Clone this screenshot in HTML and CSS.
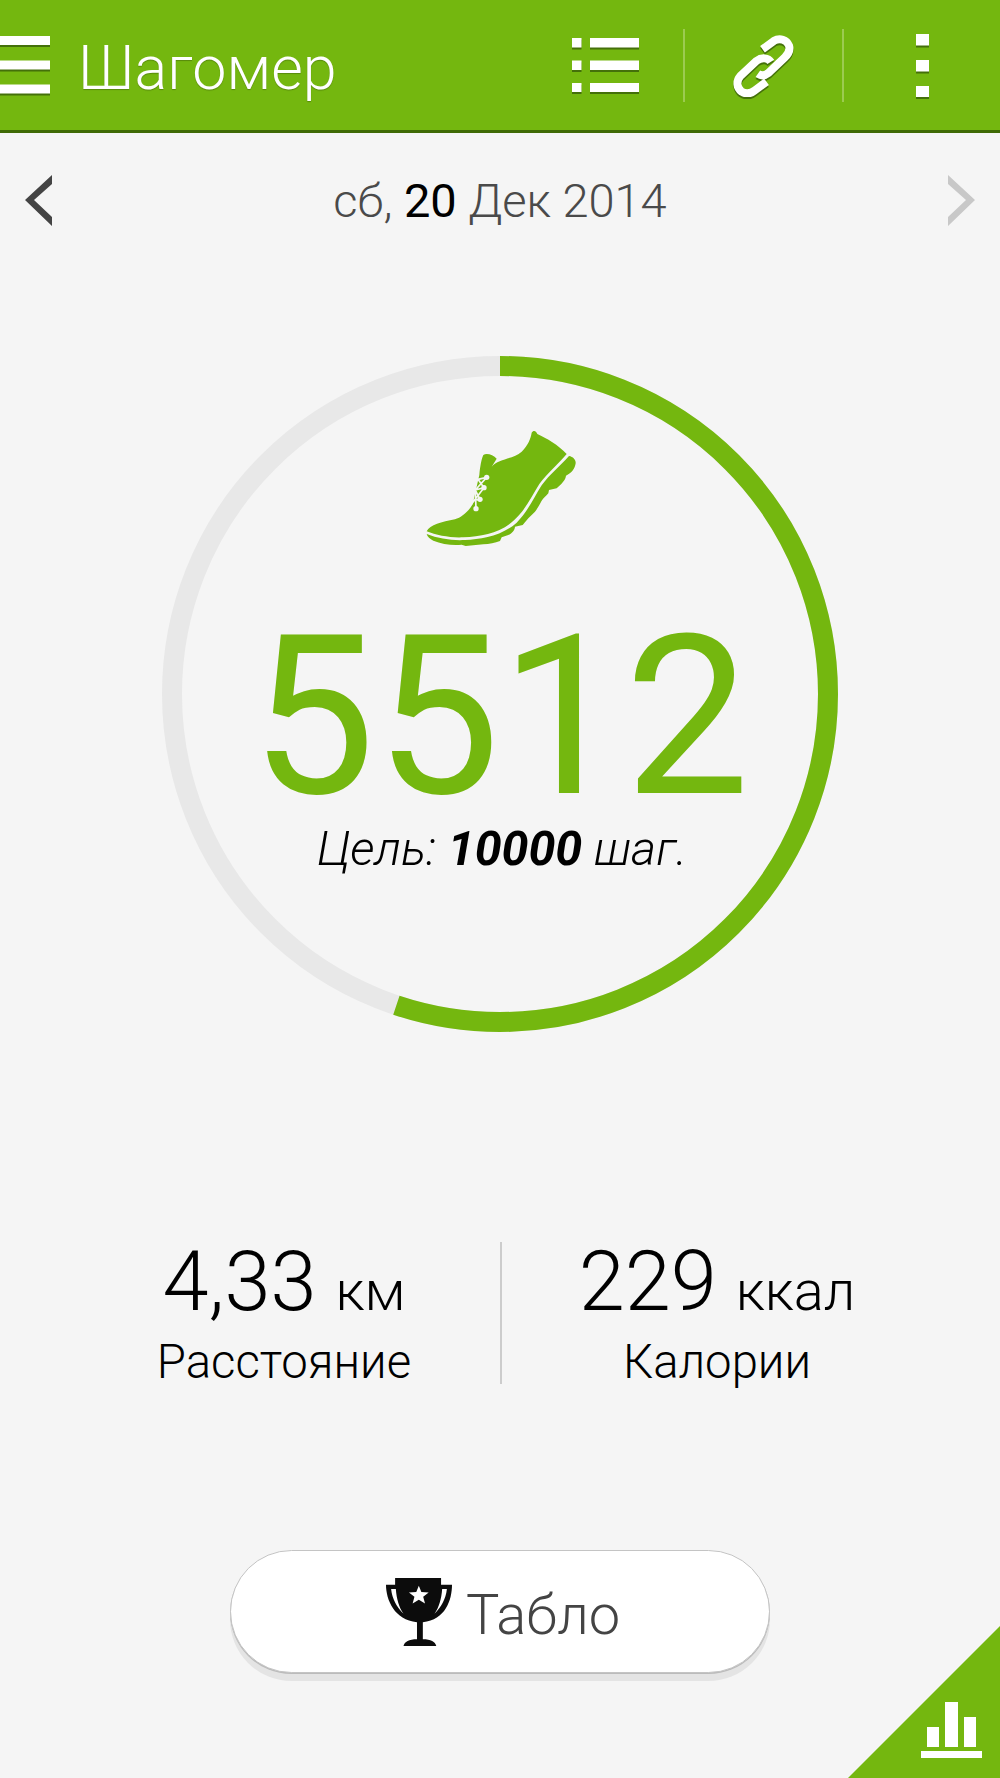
FILE: index.html
```html
<!DOCTYPE html>
<html lang="ru">
<head>
<meta charset="utf-8">
<title>Шагомер</title>
<link rel="stylesheet" href="styles.css">
</head>
<body>
<div class="app">
  <header class="topbar">
    <svg class="ico ico-menu" viewBox="0 0 50 60" width="50" height="60"><rect x="0" y="0" width="50" height="9"/><rect x="0" y="24.500" width="50" height="9"/><rect x="0" y="48.500" width="50" height="9"/></svg>
    <h1 class="title">Шагомер</h1>
    <div class="actions">
      <svg class="ico ico-list" viewBox="0 0 67 54" width="67" height="54"><rect x="0" y="0" width="9.500" height="9.500"/><rect x="18" y="0" width="49" height="9.500"/><rect x="0" y="22.500" width="9.500" height="9.500"/><rect x="18" y="22.500" width="49" height="9.500"/><rect x="0" y="45" width="9.500" height="9.500"/><rect x="18" y="45" width="49" height="9.500"/></svg>
      <span class="sep sep-a"></span>
      <svg class="ico ico-link" viewBox="100 45 185 190" width="62" height="63"><path class="link-stroke" d="M188 91 L222 66 C240 55 261 62 268 80 C272 95 265 107 255 116 L205 163 C195 171 184 172 174 165"/><path class="link-stroke" d="M213 129 C205 116 185 115 170 126 L121 172 C108 187 110 208 125 219 C140 228 155 223 165 215 L200 189"/></svg>
      <span class="sep sep-b"></span>
      <svg class="ico ico-dots" viewBox="0 0 13 63" width="13" height="63"><rect x="0" y="0" width="13" height="11.500"/><rect x="0" y="26" width="13" height="11.500"/><rect x="0" y="52" width="13" height="11.500"/></svg>
    </div>
  </header>

  <div class="datebar">
    <svg class="chev chev-prev" viewBox="0 0 27 51" width="27" height="51"><path d="M27 0 L0 25 L27 51 V42 L9 25 L27 9Z"/></svg>
    <div class="date">сб, <b>20</b> Дек 2014</div>
    <svg class="chev chev-next" viewBox="0 0 27 51" width="27" height="51"><path d="M0 0 L27 25 L0 51 V42 L18 25 L0 9Z"/></svg>
  </div>

  <section class="ring">
    <svg class="ring-svg" viewBox="0 0 676 676" width="676" height="676">
      <circle class="ring-track" cx="338" cy="338" r="328"/>
      <circle class="ring-value" cx="338" cy="338" r="328" pathLength="100" stroke-dasharray="55.12 100" transform="rotate(-90 338 338)"/>
    </svg>
    <div class="ring-body">
      <svg class="shoe" viewBox="0 0 600 450" width="200" height="150">
        <path class="shoe-fill" d="M80 364 C90 345 125 335 165 328 C185 322 205 305 218 283 L238 195 C240 170 245 145 250 135 C260 128 280 135 290 146 L275 170 C295 145 340 148 365 125 C385 105 392 85 395 68 C400 60 408 62 412 72 C440 85 475 105 500 132 C475 162 440 192 418 222 C395 258 378 298 342 331 C300 370 245 378 190 382 C150 384 110 376 80 364Z"/>
        <path class="shoe-fill" d="M507 138 C520 140 528 150 527 160 C525 175 515 190 498 197 C497 210 484 222 470 235 L447 240 L445 250 C438 258 430 265 425 272 C418 285 412 296 405 305 L385 325 L368 345 L345 350 C344 362 335 370 325 375 L305 382 L300 393 C285 398 268 402 250 403 L197 408 L185 404 C160 408 125 402 100 392 C90 387 82 380 80 372 C115 386 155 392 195 390 C245 388 305 378 350 338 C385 302 402 262 425 226 C450 192 480 168 507 138Z"/>
        <path class="lace" d="M214 283 L252 233 L226 240 L240 268 L216 272 M228 296 L226 240 L260 202 L234 208 L252 233"/>
        <circle class="lace-dot" cx="260" cy="202" r="8"/><circle class="lace-dot" cx="252" cy="233" r="8"/><circle class="lace-dot" cx="240" cy="268" r="8"/><circle class="lace-dot" cx="228" cy="296" r="8"/>
      </svg>
      <div class="steps">5512</div>
      <div class="goal">Цель: <b>10000</b> шаг.</div>
    </div>
  </section>

  <section class="stats">
    <div class="stat">
      <div class="stat-value"><span class="num">4,33</span> <span class="unit">км</span></div>
      <div class="stat-label">Расстояние</div>
    </div>
    <div class="stat">
      <div class="stat-value"><span class="num">229</span> <span class="unit">ккал</span></div>
      <div class="stat-label">Калории</div>
    </div>
  </section>

  <div class="cta">
    <button class="board" type="button">
      <svg class="cup" viewBox="487 145 181 203" width="66" height="68" preserveAspectRatio="none">
        <path class="cup-fill" d="M512 145H638V165H668C668 210 650 270 588 277V328C610 328 622 335 625 348H535C538 335 550 328 572 328V277C510 270 487 210 487 165H512Z"/>
        <path class="cup-hole" d="M501 178H514C516 208 523 233 535 252C517 232 504 208 501 178ZM654 178H641C639 208 632 233 620 252C638 232 651 208 654 178Z"/>
        <path class="cup-hole" d="M577 168L584 187L604 188L589 201L594 221L577 210L560 221L565 201L550 188L570 187Z"/>
      </svg>
      <span class="board-text">Табло</span>
    </button>
  </div>

  <div class="corner">
    <svg class="corner-ico" viewBox="0 0 61 56" width="61" height="56"><rect x="6" y="25" width="12" height="20"/><rect x="24" y="0" width="13" height="45"/><rect x="43" y="15" width="12" height="30"/><rect x="0" y="49" width="61" height="7"/></svg>
  </div>
</div>
</body>
</html>
```
FILE: styles.css
```css
* { box-sizing: border-box; }
html, body { margin: 0; padding: 0; }
body {
  background: #f5f5f5;
  font-family: Roboto, "Noto Sans", sans-serif;
  font-weight: 300;
  color: #000;
}
.app { position: relative; width: 1000px; height: 1778px; overflow: hidden; }

.topbar {
  display: flex;
  align-items: center;
  height: 133px;
  background: #74b70f;
  border-bottom: 3px solid #3f6a06;
}
.ico { display: block; fill: #fff; filter: drop-shadow(0 2px 0 #44700a); flex: none; }
.ico-menu { margin-top: 2px; }
.title {
  margin: 6px 0 0 28px;
  font-size: 61px;
  font-weight: 300;
  color: #fff;
  text-shadow: 0 1px 1px rgba(0, 0, 0, .25);
}
.actions { display: flex; align-items: center; margin-left: auto; padding-right: 71px; }
.sep { display: block; width: 2px; height: 73px; background: #9ccb50; }
.sep-a { margin: 0 0 0 44px; }
.ico-link { margin: 0 47px 0 48px; }
.ico-dots { margin-left: 72px; }
.link-stroke { fill: none; stroke: #fff; stroke-width: 24; }

.datebar {
  display: flex;
  align-items: center;
  justify-content: space-between;
  height: 134px;
  padding: 0 25px;
}
.chev { display: block; }
.chev-prev { fill: #444; }
.chev-next { fill: #c8c8c8; }
.date { font-size: 47px; color: #4a4a4a; }
.date b { font-weight: 400; color: #000; }

.ring { position: relative; width: 676px; height: 676px; margin: 89px auto 0; }
.ring-svg { display: block; }
.ring-track { fill: none; stroke: #e8e8e8; stroke-width: 20; }
.ring-value { fill: none; stroke: #74b70f; stroke-width: 20; }
.ring-body {
  position: absolute;
  inset: 0;
  display: flex;
  flex-direction: column;
  align-items: center;
}
.shoe { display: block; margin: 54px 0 0 0; flex: none; }
.shoe-fill { fill: #74b70f; }
.lace { fill: none; stroke: #f5f5f5; stroke-width: 5; }
.lace-dot { fill: #f5f5f5; }
.steps {
  margin: 57px 0 0 0;
  font-size: 222px;
  font-weight: 400;
  line-height: 200px;
  color: #74b70f;
}
.goal { margin: 4px 0 0 4px; font-size: 48.300px; font-style: italic; line-height: 56px; }
.goal b { font-weight: 700; }

.stats { display: flex; justify-content: center; margin-top: 210px; height: 142px; }
.stat { width: 432px; text-align: center; }
.stat + .stat { border-left: 2px solid #ccc; }
.stat-value { height: 86px; line-height: 80px; white-space: nowrap; }
.num { font-size: 83px; }
.unit { font-size: 56px; margin-left: 15px; }
.stat-label { margin-top: 11px; font-size: 47.300px; line-height: 46px; }

.cta { display: flex; justify-content: center; margin-top: 166px; }
.board {
  display: flex;
  align-items: center;
  justify-content: center;
  gap: 14px;
  width: 540px;
  height: 123px;
  padding: 0 0 0 6px;
  background: #fff;
  border: 1px solid #c4c4c4;
  border-radius: 62px;
  box-shadow: 0 1px 0 #bbb, 0 8px 0 #e4e4e4;
  font: inherit;
}
.cup { display: block; flex: none; }
.cup-fill { fill: #0c0c0c; }
.cup-hole { fill: #fff; }
.board-text { margin-top: 6px; font-size: 56px; color: #444; }

.corner {
  position: absolute;
  right: 0;
  bottom: 0;
  width: 152px;
  height: 152px;
  background: #74b70f;
  clip-path: polygon(100% 0, 100% 100%, 0 100%);
}
.corner-ico { position: absolute; left: 73px; top: 76px; fill: #fff; }
```
